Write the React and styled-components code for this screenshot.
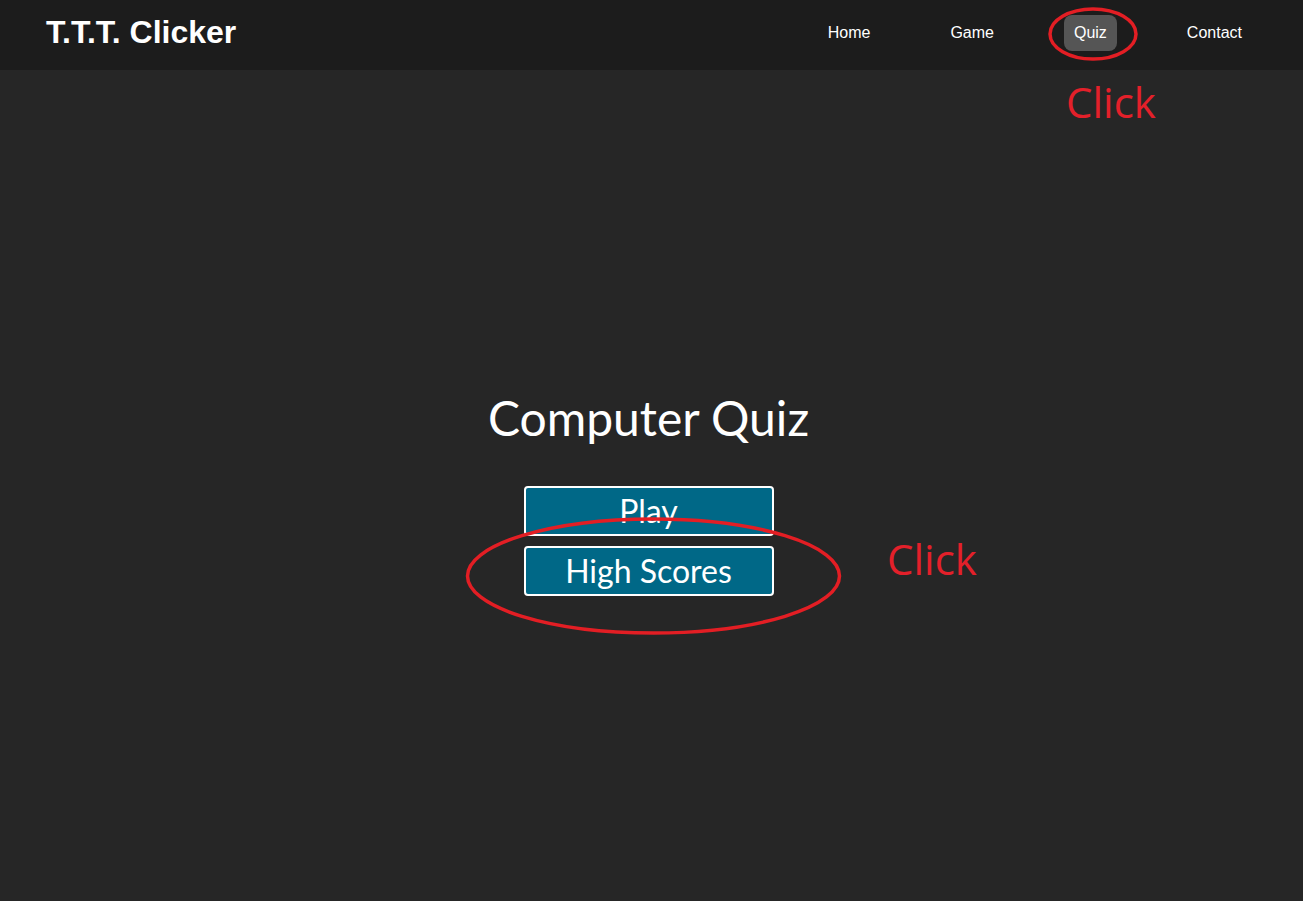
import React from "react";
import styled, { createGlobalStyle } from "styled-components";

const Global = createGlobalStyle`
  html, body { margin: 0; padding: 0; background: #262626; }
  body { font-family: "Liberation Sans", Arial, sans-serif; }
  #root { min-height: 901px; }
`;

const Page = styled.div`
  position: relative;
  min-height: 901px;
  background: #262626;
`;

const Header = styled.header`
  height: 70px;
  background: #1c1c1c;
  display: flex;
  align-items: center;
  justify-content: space-between;
  padding: 0 21px 0 46px;
  box-sizing: border-box;
`;

const Logo = styled.div`
  color: #fff;
  font-family: "Liberation Sans", Arial, sans-serif;
  font-weight: bold;
  font-size: 32px;
  margin-top: -6px;
`;

const Nav = styled.nav`
  display: flex;
  align-items: center;
  margin-top: -5px;
`;

const NavLink = styled.a`
  color: #fff;
  font-size: 16px;
  font-family: "Liberation Sans", Arial, sans-serif;
  text-decoration: none;
  padding: 9px 10px;
  margin: 0 30px;
  border-radius: 8px;
  line-height: 18px;
  background: ${(p) => (p.$active ? "#555555" : "transparent")};
`;

const Main = styled.main`
  display: flex;
  flex-direction: column;
  align-items: center;
  padding: 319px 6px 0 0;
`;

const Title = styled.h1`
  margin: 0 0 39px;
  color: #fff;
  font-family: Lato, sans-serif;
  font-weight: 400;
  font-size: 48px;
  line-height: 58px;
`;

const Button = styled.button`
  width: 250px;
  height: 50px;
  margin-bottom: 10px;
  background: #006887;
  border: 2px solid #fff;
  border-radius: 4px;
  color: #fff;
  font-family: Lato, sans-serif;
  font-size: 32px;
  line-height: 44px;
  padding: 0;
  box-sizing: border-box;
`;

const Overlay = styled.svg`
  position: absolute;
  left: 0;
  top: 0;
  width: 1303px;
  height: 901px;
  pointer-events: none;
`;

const Note = styled.span`
  position: absolute;
  left: ${(p) => p.$x}px;
  top: ${(p) => p.$y}px;
  color: #e3202a;
  font-family: "Open Sans", "Noto Sans", sans-serif;
  font-size: 42px;
  line-height: 1;
`;

export default function App() {
  return (
    <Page>
      <Global />
      <Header>
        <Logo>T.T.T. Clicker</Logo>
        <Nav>
          <NavLink>Home</NavLink>
          <NavLink>Game</NavLink>
          <NavLink $active>Quiz</NavLink>
          <NavLink>Contact</NavLink>
        </Nav>
      </Header>
      <Main>
        <Title>Computer Quiz</Title>
        <Button>Play</Button>
        <Button>High Scores</Button>
      </Main>
      <Overlay viewBox="0 0 1303 901">
        <ellipse cx="1093" cy="34" rx="43" ry="25" fill="none" stroke="#e31e24" strokeWidth="3.5" />
        <ellipse cx="653.5" cy="576" rx="186" ry="57" fill="none" stroke="#e31e24" strokeWidth="3.5" />
      </Overlay>
      <Note $x={1066} $y={81}>Click</Note>
      <Note $x={887} $y={538}>Click</Note>
    </Page>
  );
}
